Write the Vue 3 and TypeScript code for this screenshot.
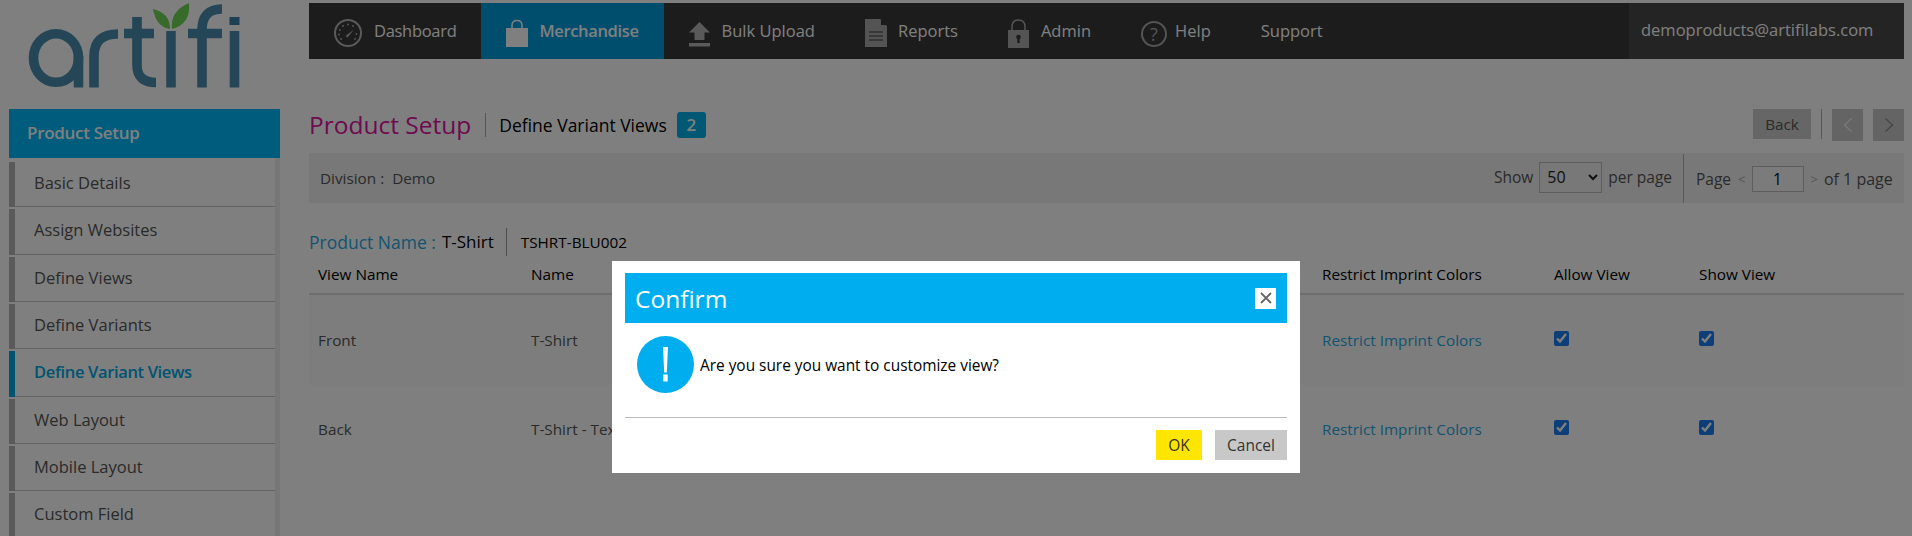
<script setup lang="ts">
const sideItems: string[] = ['Basic Details', 'Assign Websites', 'Define Views', 'Define Variants', 'Define Variant Views', 'Web Layout', 'Mobile Layout', 'Custom Field']
const rows = [
  { view: 'Front', name: 'T-Shirt', tinted: true },
  { view: 'Back', name: 'T-Shirt - Text', tinted: false }
]
</script>

<template>
  <div class="page">
    <aside class="side">
      <div class="logo">
        <svg width="272" height="109" viewBox="0 0 272 109" role="img" aria-label="artifi">
          <g fill="none" stroke="#4a8cac" stroke-width="9.6">
            <ellipse cx="56" cy="58" rx="22.5" ry="24.3" />
            <line x1="78.5" y1="56" x2="78.5" y2="87.5" />
            <path d="M94 87.5V56Q94 34 118 34" />
            <path d="M137 17V65Q137 82.5 156 82.5" />
            <line x1="124" y1="33.5" x2="154" y2="33.5" />
            <line x1="171" y1="31" x2="171" y2="87.5" />
            <path d="M202 87.5V30Q202 9 222 9" />
            <line x1="188" y1="33.5" x2="222" y2="33.5" />
            <line x1="234.500" y1="31" x2="234.500" y2="87.5" />
          </g>
          <rect x="229.500" y="17" width="10" height="8" fill="#3c80a8" />
          <path d="M153 9Q170 13 170 29Q156 27 153 9Z" fill="#70d454" />
          <path d="M189 3Q191 24 172 29Q170 11 189 3Z" fill="#70d454" />
        </svg>
      </div>
      <div class="side-head">Product Setup</div>
      <ul class="side-list">
        <li v-for="item in sideItems" :key="item" class="side-item" :class="{ on: item === 'Define Variant Views' }">
          <span class="side-label">{{ item }}</span>
        </li>
      </ul>
    </aside>

    <main class="main">
      <nav class="nav">
        <a class="nav-item dash">
          <svg width="28" height="28" viewBox="0 0 28 28" class="ic">
            <circle cx="14" cy="14" r="13" fill="none" stroke="#b4b4b4" stroke-width="2" />
            <path d="M11.500 17L20 10.500L13.500 18.500Z" fill="#b4b4b4" />
            <g fill="#b4b4b4">
              <circle cx="14" cy="5.500" r=".9" /><circle cx="9" cy="7" r=".9" /><circle cx="19" cy="7" r=".9" />
              <circle cx="5.800" cy="11" r=".9" /><circle cx="5" cy="15.500" r=".9" /><circle cx="7" cy="20" r=".9" />
              <circle cx="22.500" cy="15" r=".9" /><circle cx="21" cy="20" r=".9" />
            </g>
          </svg>
          <span class="nav-text">Dashboard</span>
        </a>
        <a class="nav-item active">
          <svg width="22" height="28" viewBox="0 0 22 28" class="ic m-gap">
            <path d="M6 10V6.500Q6 1.500 11 1.500Q16 1.500 16 6.500V10" fill="none" stroke="#fff" stroke-width="1.500" />
            <rect x="0" y="9" width="22" height="19" fill="#fff" />
          </svg>
          <span class="nav-text">Merchandise</span>
        </a>
        <a class="nav-item">
          <svg width="21" height="25" viewBox="0 0 21 25" class="ic down">
            <path d="M10.500 0L21 10.500H15.500V18H5.500V10.500H0Z" fill="#b4b4b4" />
            <rect x="0" y="21" width="21" height="3.500" fill="#b4b4b4" />
          </svg>
          <span class="nav-text">Bulk Upload</span>
        </a>
        <a class="nav-item">
          <svg width="22" height="28" viewBox="0 0 22 28" class="ic m-gap">
            <path d="M0 0H15L22 7V28H0Z" fill="#a8a8a8" />
            <path d="M16 0L22 6H16Z" fill="#383838" />
            <path d="M4 13H18M4 17H18M4 21H18" stroke="#383838" stroke-width="1" />
          </svg>
          <span class="nav-text">Reports</span>
        </a>
        <a class="nav-item">
          <svg width="21" height="29" viewBox="0 0 21 29" class="ic">
            <path d="M4 12V8Q4 1 10.500 1Q17 1 17 8V12" fill="none" stroke="#a8a8a8" stroke-width="1.500" />
            <rect x="0" y="11" width="21" height="18" fill="#a8a8a8" />
            <circle cx="10.500" cy="18" r="2.300" fill="#383838" />
            <rect x="9.300" y="18" width="2.400" height="6" fill="#383838" />
          </svg>
          <span class="nav-text">Admin</span>
        </a>
        <a class="nav-item">
          <svg width="26" height="26" viewBox="0 0 26 26" class="ic help down">
            <circle cx="13" cy="13" r="12" fill="none" stroke="#a8a8a8" stroke-width="2" />
            <text x="13" y="19.500" text-anchor="middle" font-size="18" font-family="Open Sans, sans-serif" fill="#a8a8a8">?</text>
          </svg>
          <span class="nav-text">Help</span>
        </a>
        <a class="nav-item"><span class="nav-text">Support</span></a>
        <div class="nav-user">demoproducts@artifilabs.com</div>
      </nav>

      <header class="title-row">
        <h1 class="title">Product Setup</h1>
        <h2 class="subtitle">Define Variant Views</h2>
        <span class="badge">2</span>
        <div class="actions">
          <button class="btn back" type="button">Back</button>
          <span class="act-sep"></span>
          <button class="btn arrow" type="button">
            <svg width="10" height="14" viewBox="0 0 10 14"><path d="M8.500 .5L1.500 7L8.500 13.500" fill="none" stroke="#f4f4f4" stroke-width="1.200" /></svg>
          </button>
          <button class="btn arrow" type="button">
            <svg width="10" height="14" viewBox="0 0 10 14"><path d="M1.500 .5L8.500 7L1.500 13.500" fill="none" stroke="#888" stroke-width="1.200" /></svg>
          </button>
        </div>
      </header>

      <section class="bar">
        <span class="division">Division :&nbsp; Demo</span>
        <div class="show">
          <span>Show</span>
          <select class="sel"><option>50</option><option>100</option></select>
          <span>per page</span>
        </div>
        <div class="pager">
          <span>Page</span><span class="pg-arrow">&lt;</span>
          <input class="pg-input" type="text" value="1" readonly />
          <span class="pg-arrow">&gt;</span><span class="pg-of">of 1 page</span>
        </div>
      </section>

      <section class="prod">
        <span class="prod-label">Product Name :</span>
        <span class="prod-name">T-Shirt</span>
        <span class="prod-sku">TSHRT-BLU002</span>
      </section>

      <div class="table">
        <div class="tr th">
          <span>View Name</span><span>Name</span><span>Restrict Imprint Colors</span><span>Allow View</span><span>Show View</span>
        </div>
        <div v-for="row in rows" :key="row.view" class="tr td" :class="{ tinted: row.tinted }">
          <span>{{ row.view }}</span>
          <span>{{ row.name }}</span>
          <a class="link">Restrict Imprint Colors</a>
          <span class="cell-check"><input type="checkbox" checked /></span>
          <span class="cell-check"><input type="checkbox" checked /></span>
        </div>
      </div>
    </main>

    <div class="overlay"></div>
    <div class="modal" role="dialog">
      <div class="modal-head">
        <span class="modal-title">Confirm</span>
        <button class="close" type="button" aria-label="Close">
          <svg width="12" height="12" viewBox="0 0 12 12"><path d="M1 1L11 11M11 1L1 11" stroke="#666" stroke-width="1.800" /></svg>
        </button>
      </div>
      <div class="modal-body">
        <svg class="alert" width="57" height="57" viewBox="0 0 57 57">
          <circle cx="28.500" cy="28.500" r="28.500" fill="#00aeef" />
          <path d="M26 11H31L29.800 36.500H27.200Z" fill="#fff" />
          <rect x="26.300" y="38.500" width="4.400" height="7" fill="#fff" />
        </svg>
        <span class="msg">Are you sure you want to customize view?</span>
      </div>
      <div class="modal-foot">
        <button class="m-btn ok" type="button">OK</button>
        <button class="m-btn cancel" type="button">Cancel</button>
      </div>
    </div>
  </div>
</template>

<style>
html, body { margin: 0; background: #fff; overflow: hidden; }
</style>

<style scoped>
* { box-sizing: border-box; }
.page {
  position: relative;
  display: flex;
  width: 1912px;
  height: 536px;
  overflow: hidden;
  padding: 0 8px 0 9px;
  background: #fff;
  font-family: "Open Sans", "Noto Sans", sans-serif;
  font-size: 15.3px;
  color: #444;
}

/* sidebar */
.side { width: 271px; flex: none; }
.logo { height: 109px; margin-left: -9px; width: 280px; }
.logo svg { display: block; }
.side-head {
  height: 49px;
  padding-left: 18px;
  line-height: 48px;
  background: #00b8f8;
  color: #fff;
  font-size: 17px;
  font-weight: 600;
  letter-spacing: -.3px;
}
.side-list {
  list-style: none;
  margin: 0;
  padding: 4px 0 0;
  border-right: 5px solid #eee;
  height: 400px;
}
.side-item {
  display: flex;
  align-items: center;
  height: 45.33px;
  margin-bottom: 2px;
  border-left: 6px solid #b4b4b4;
  padding-left: 19px;
  font-size: 16.5px;
  color: #555;
  box-shadow: inset 0 -1px 0 #c8c8c8;
}
.side-label { position: relative; top: -2px; }
.side-item.on { border-left-color: #00a8e0; color: #00a8e4; font-weight: 600; letter-spacing: -.35px; }

/* main */
.main { margin-left: 29px; width: 1595px; flex: none; padding-top: 3px; }
.nav {
  display: flex;
  height: 56px;
  background: #383838;
  color: #fff;
  font-size: 16.5px;
}
.nav-item { display: flex; align-items: center; padding: 0 25px; }
.nav-item.dash { letter-spacing: -.3px; }
.nav-item.active { background: #009ddb; font-weight: 600; letter-spacing: -.35px; }
.nav-text { position: relative; top: -1px; }
.ic { flex: none; margin-right: 12px; position: relative; top: 2px; }
.ic.m-gap { margin-right: 11px; }
.ic.help { margin-right: 8px; }
.ic.down { top: 3px; }
.nav-user {
  margin-left: auto;
  width: 275px;
  padding-left: 12px;
  background: #484848;
  line-height: 54px;
  white-space: nowrap;
}

.title-row { display: flex; align-items: flex-start; padding-top: 50px; height: 94px; }
.title {
  margin: 4px 0 0;
  padding-right: 14px;
  border-right: 1px solid #aaa;
  height: 24px;
  font-size: 24.5px;
  line-height: 24px;
  font-weight: 400;
  color: #dc14a0;
}
.subtitle {
  margin: 4px 0 0 13px;
  font-size: 17.5px;
  line-height: 24px;
  font-weight: 400;
  color: #000;
}
.badge {
  margin: 3px 0 0 10px;
  width: 29px;
  height: 26px;
  border-radius: 3px;
  background: #00b0e8;
  color: #fff;
  font-size: 17px;
  font-weight: 600;
  line-height: 26px;
  text-align: center;
}
.actions { margin-left: auto; display: flex; align-items: flex-start; }
.btn {
  border: 0;
  padding: 0;
  background: #ccc;
  color: #555;
  font: inherit;
}
.back { width: 58px; height: 30px; }
.act-sep { width: 1px; height: 30px; background: #aaa; margin: 0 10px; }
.arrow { width: 31px; height: 32px; display: flex; align-items: center; justify-content: center; background: #c8c8c8; }
.arrow + .arrow { margin-left: 10px; }

.bar {
  display: flex;
  align-items: center;
  height: 50px;
  padding-left: 11px;
  background: #f0f0f0;
  color: #555;
}
.show { margin-left: auto; display: flex; align-items: center; gap: 6px; margin-top: -2px; font-size: 15.5px; }
.sel {
  width: 63px;
  height: 31px;
  border: 1px solid #bbb;
  background: transparent;
  color: #222;
  font: inherit;
  font-size: 16px;
  padding-left: 3px;
}
.pager {
  display: flex;
  align-items: center;
  height: 49px;
  margin-left: 11px;
  padding: 2px 0 0 12px;
  border-left: 1px solid #b4b4b4;
  font-size: 15.5px;
  width: 221px;
}
.pg-arrow { color: #aaa; margin: 0 6px 0 7px; font-size: 13px; }
.pg-of { font-size: 16px; }
.pg-input {
  width: 52px;
  height: 26px;
  border: 1px solid #bbb;
  background: #f6f6f6;
  text-align: center;
  font: inherit;
  color: #003;
}

.prod { display: flex; align-items: center; height: 52px; padding-top: 26px; }
.prod-label { color: #28a8e0; font-size: 17.5px; }
.prod-name { margin-left: 6px; padding-right: 12px; color: #000; font-size: 17px; border-right: 1px solid #999; line-height: 28px; }
.prod-sku { margin-left: 14px; color: #000; }

.tr {
  display: grid;
  grid-template-columns: 213px 791px 232px 145px 1fr;
  padding-left: 9px;
  align-items: center;
}
.th { height: 40px; border-bottom: 2px solid #ddd; color: #000; }
.td { height: 88px; color: #555; }
.td.tinted { height: 90px; background: #fafafa; }
.link { color: #28a8e0; }
.cell-check { display: flex; position: relative; top: -1.500px; }
.cell-check input { width: 15px; height: 15px; margin: 0; accent-color: #1a7cf0; }

/* overlay */
.overlay { position: absolute; inset: 0; background: rgba(0, 0, 0, .5); }
.modal {
  position: absolute;
  left: 612px;
  top: 261px;
  width: 688px;
  height: 212px;
  padding: 12px 13px 0;
  background: #fff;
  color: #000;
}
.modal-head {
  display: flex;
  align-items: center;
  justify-content: space-between;
  height: 50px;
  padding: 0 11px 0 10px;
  background: #00aeef;
  color: #fff;
}
.modal-title { font-size: 24.5px; }
.close {
  width: 21px;
  height: 21px;
  border: 0;
  padding: 0;
  background: #fff;
  display: flex;
  align-items: center;
  justify-content: center;
}
.modal-body {
  display: flex;
  align-items: center;
  height: 95px;
  padding: 0 0 12px 12px;
  border-bottom: 1px solid #bbb;
}
.alert { flex: none; margin-right: 6px; }
.msg { font-size: 15.4px; position: relative; top: 1px; }
.modal-foot { display: flex; justify-content: flex-end; gap: 13px; padding-top: 12px; }
.m-btn { border: 0; padding: 0; height: 30px; font: inherit; font-size: 15.5px; color: #333; }
.ok { width: 46px; background: #ffe600; }
.cancel { width: 72px; background: #c8c8c8; }
</style>
